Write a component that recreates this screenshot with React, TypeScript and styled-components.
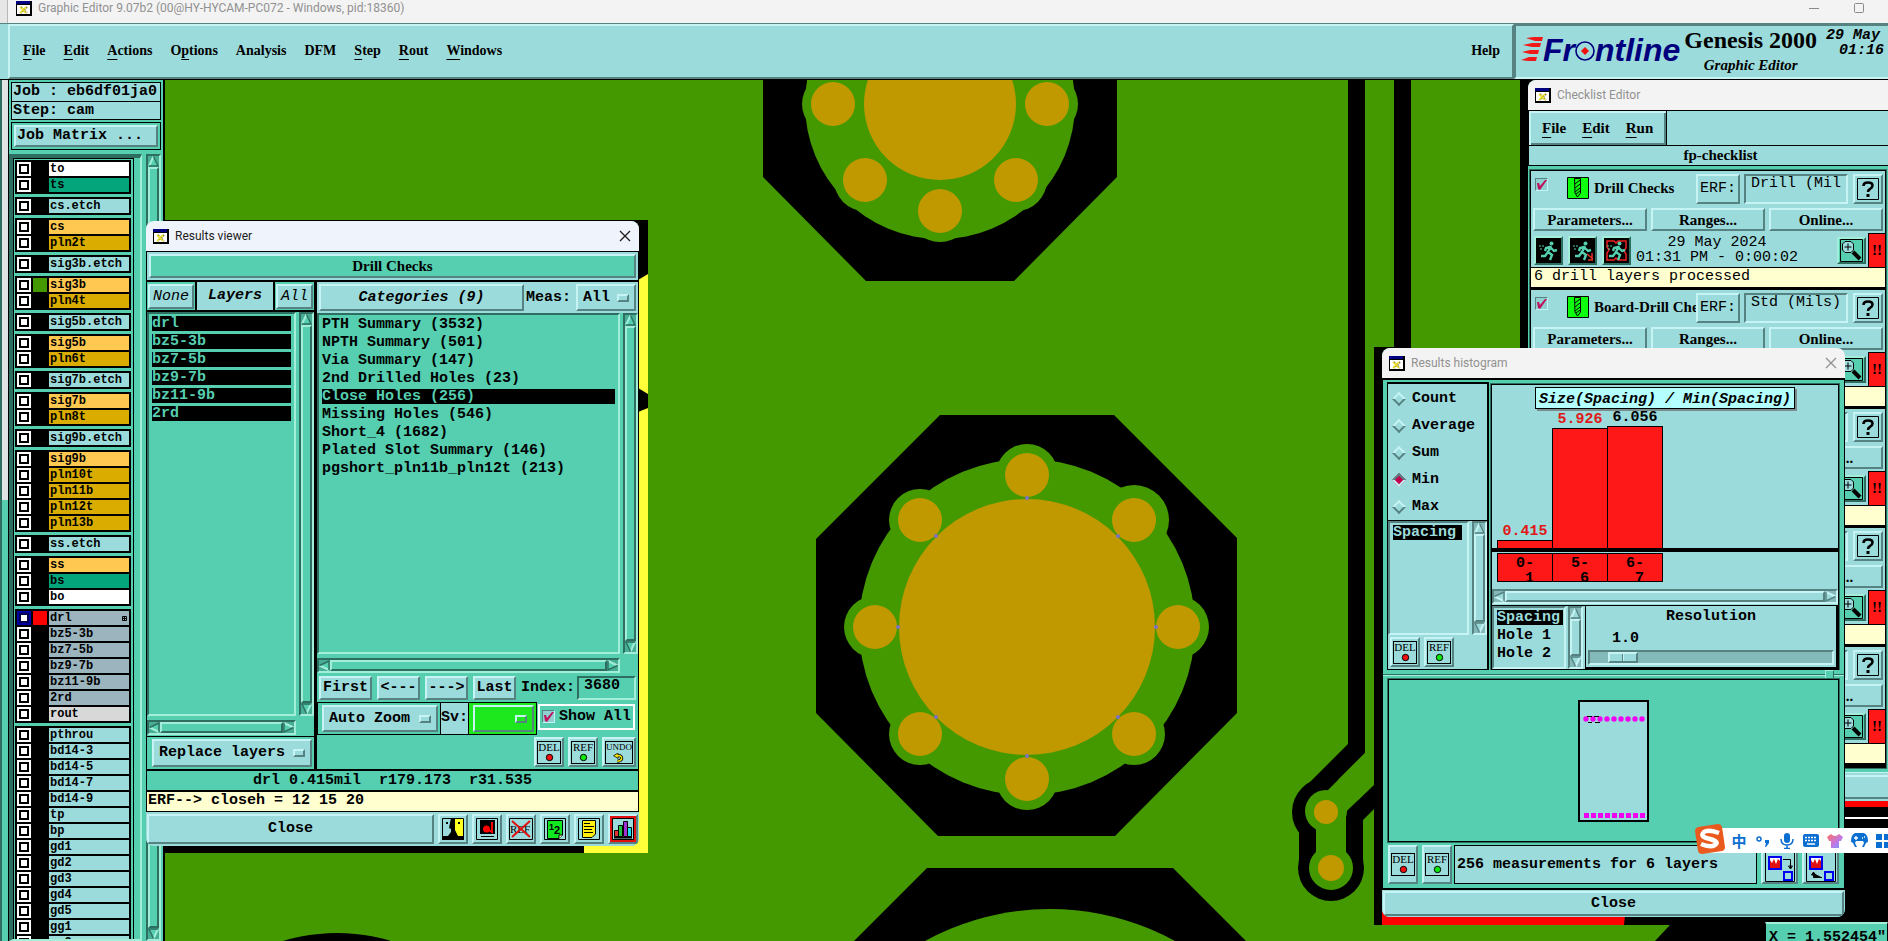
import React from "react";
import styled, { createGlobalStyle, css } from "styled-components";

const cyan = "#9cdbdb";
const cyanLight = "#c6f3f3";
const cyanDark = "#568282";
const teal = "#55cfb0";
const tealLight = "#a2eed8";
const tealDark = "#2d6e60";
const cream = "#ffffcf";
const board = "#449900";
const gold = "#c09800";
const mono = `"Liberation Mono", "Courier New", monospace`;
const serif = `"Liberation Serif", "Times New Roman", serif`;
const ui = `Roboto, "Segoe UI", sans-serif`;

type Tone = { $teal?: boolean };

const raised = css<Tone>`
  border: 2px solid;
  border-color: ${(p) =>
    p.$teal
      ? `${tealLight} ${tealDark} ${tealDark} ${tealLight}`
      : `${cyanLight} ${cyanDark} ${cyanDark} ${cyanLight}`};
`;

const sunken = css<Tone>`
  border: 2px solid;
  border-color: ${(p) =>
    p.$teal
      ? `${tealDark} ${tealLight} ${tealLight} ${tealDark}`
      : `${cyanDark} ${cyanLight} ${cyanLight} ${cyanDark}`};
`;

const Global = createGlobalStyle`
  *, *::after { box-sizing: border-box; }
  body { margin: 0; background: #000; }
  button, input, select { font: inherit; color: inherit; margin: 0; padding: 0; border-radius: 0; }
  ul { list-style: none; margin: 0; padding: 0; }
  svg { display: block; flex: none; }
`;

const Page = styled.div`
  position: relative;
  display: flex;
  flex-direction: column;
  height: 100vh;
  overflow: hidden;
  font: bold 15px/18px ${mono};
  color: #000;
  white-space: pre;
`;

/* ---------- main window chrome ---------- */

const MainTitle = styled.header`
  display: flex;
  align-items: center;
  gap: 6px;
  height: 23px;
  flex: none;
  margin-left: 7px;
  padding: 0 24px 7px 8px;
  border-left: 1px solid #b8b8b8;
  background: #f3f3f3;
  color: #919191;
  font: 12px/16px ${ui};
`;
const TitleBack = styled.div`
  background: #e6e6e6;
  flex: none;
`;
const MainTitleText = styled.span`
  flex: 1;
`;
const WindowGlyphs = styled.div`
  display: flex;
  gap: 35px;
`;

const TopBar = styled.div`
  display: flex;
  flex: none;
  height: 57px;
  padding-left: 8px;
  border-top: 1px solid ${cyanDark};
  border-bottom: 1px solid #000;
  background: ${cyan};
`;
const MenuBar = styled.nav`
  display: flex;
  align-items: center;
  flex: 1;
  gap: 18px;
  padding: 0 12px 2px 13px;
  background: ${cyan};
  ${raised}
`;
const MenuItem = styled.button<{ $push?: boolean }>`
  border: 0;
  background: none;
  font: bold 14px/20px ${serif};
  text-underline-offset: 4px;
  ${(p) => p.$push && "margin-left: auto;"}
`;
const Brand = styled.div`
  display: flex;
  flex: none;
  width: 374px;
  padding: 2px 4px 0 5px;
  background: ${cyan};
  ${sunken}
  border-right: 0;
`;
const Logo = styled.div`
  display: flex;
  align-items: center;
  height: 40px;
  margin-top: 2px;
  color: #00007e;
  font: italic bold 32px/40px "Liberation Sans", Arial, sans-serif;
`;
const Product = styled.div`
  display: flex;
  flex-direction: column;
  align-items: center;
  margin-left: 4px;
`;
const ProductName = styled.span`
  font: bold 24px/24px ${serif};
`;
const ProductSub = styled.span`
  font: italic bold 15px/26px ${serif};
`;
const Clock = styled.time`
  display: flex;
  flex-direction: column;
  align-items: flex-end;
  margin-left: auto;
  font: italic bold 15px/15px ${mono};
`;
const ClockDate = styled.span`
  margin-right: 4px;
`;

const Body = styled.div`
  display: flex;
  flex: 1;
  min-height: 0;
`;
const Edge = styled.div`
  width: 8px;
  flex: none;
  border-left: 2px solid ${tealDark};
  background: linear-gradient(#dfe3e3 420px, ${teal} 420px);
`;
const Sidebar = styled.aside`
  display: flex;
  flex-direction: column;
  width: 157px;
  flex: none;
  border-left: 1px solid #000;
  border-right: 2px solid #000;
  background: ${teal};
`;
const JobLine = styled.div`
  height: 20px;
  margin: 0 2px;
  padding-left: 1px;
  border: 1px solid #000;
  background: ${cyan};
  & + & {
    height: 19px;
    margin-top: -1px;
  }
  &:first-child {
    margin-top: 2px;
  }
`;
const MatrixFrame = styled.div`
  display: flex;
  height: 28px;
  margin: 2px 2px 4px;
  padding: 2px;
  border: 1px solid #000;
`;
const MatrixButton = styled.button`
  flex: 1;
  padding-left: 1px;
  text-align: left;
  background: ${cyan};
  ${raised}
`;
const LayerArea = styled.div`
  display: flex;
  flex: 1;
  min-height: 0;
  justify-content: space-between;
  padding-right: 2px;
`;
const LayerWell = styled.div`
  width: 133px;
  padding-right: 6px;
  border: solid;
  border-width: 4px 2px 2px 4px;
  border-color: ${tealDark} ${tealLight} ${tealLight} ${tealDark};
  overflow: hidden;
`;
const LayerList = styled.div`
  display: flex;
  flex-direction: column;
  gap: 3px;
  padding: 1px 2px 1px 1px;
  border: 1px solid #000;
`;
const LayerGroup = styled.div`
  padding: 1px;
  background: #000;
`;
const LayerRow = styled.label`
  display: flex;
  align-items: center;
  gap: 2px;
  height: 16px;
  padding: 1px;
`;
const LayerCheck = styled.input<{ $active?: boolean }>`
  appearance: none;
  width: 14px;
  height: 14px;
  border: 2px solid ${(p) => (p.$active ? "#0000a8" : "#fff")};
  background: #fff;
  outline: 2px solid ${(p) => (p.$active ? "#00004a" : "#000")};
  outline-offset: -4px;
`;
const Swatch = styled.span`
  width: 14px;
  height: 14px;
`;
const LayerName = styled.span`
  display: flex;
  align-items: center;
  justify-content: space-between;
  flex: 1;
  height: 14px;
  padding: 0 2px 0 1px;
  font: bold 12px/14px ${mono};
`;

const Canvas = styled.main`
  flex: 1;
  min-width: 0;
  background: ${board};
`;

/* ---------- floating windows ---------- */

const Window = styled.section`
  position: absolute;
  display: flex;
  flex-direction: column;
  border-radius: 8px;
  overflow: hidden;
`;
const ResultsWindow = styled(Window)`
  left: 146px;
  top: 221px;
  width: 493px;
  height: 625px;
  background: ${teal};
`;
const HistogramWindow = styled(Window)`
  left: 1382px;
  top: 348px;
  width: 463px;
  height: 569px;
  background: ${teal};
`;
const ChecklistWindow = styled(Window)`
  left: 1528px;
  top: 80px;
  width: 384px;
  background: ${teal};
`;
const TitleBar = styled.header<{ $active?: boolean }>`
  display: flex;
  align-items: center;
  gap: 6px;
  height: 30px;
  flex: none;
  padding: 0 8px 0 7px;
  background: ${(p) => (p.$active ? "#eff3fb" : "#f3f3f3")};
  color: ${(p) => (p.$active ? "#1c1c1c" : "#919191")};
  font: 12px/16px ${ui};
`;
const CloseX = styled.button`
  display: grid;
  place-items: center;
  margin-left: auto;
  border: 0;
  background: none;
`;

const Button = styled.button<Tone & { $w?: number }>`
  display: flex;
  align-items: center;
  justify-content: center;
  flex: none;
  ${(p) => p.$w && `width: ${p.$w}px;`}
  background: ${(p) => (p.$teal ? teal : cyan)};
  ${raised}
`;

/* ---------- scrollbars ---------- */

const Bar = styled.div<Tone & { $across?: boolean }>`
  display: flex;
  flex: none;
  flex-direction: ${(p) => (p.$across ? "row" : "column")};
  ${(p) => (p.$across ? "height: 15px;" : "width: 15px;")}
  background: ${(p) => (p.$teal ? "#47ae95" : "#83b9b9")};
  ${sunken}
`;
const Thumb = styled.div<Tone>`
  flex: 1;
  background: ${(p) => (p.$teal ? teal : cyan)};
  ${raised}
`;
const Arrow = ({ dir, teal: t }: { dir: number; teal?: boolean }) => (
  <svg width="11" height="11" viewBox="0 0 11 11">
    <g transform={`rotate(${dir} 5.5 5.5)`}>
      <path d="M5.500 0.500 L10.500 10.500 H.5 Z" fill={t ? teal : cyan} />
      <path d="M5.500 0.500 L1 10" stroke={t ? tealLight : cyanLight} strokeWidth="2" />
      <path d="M5.500 0.500 L10 10 H1" fill="none" stroke={t ? tealDark : cyanDark} strokeWidth="1.400" />
    </g>
  </svg>
);
const Scrollbar = ({ across, teal: t }: { across?: boolean; teal?: boolean }) => (
  <Bar $across={across} $teal={t}>
    <Arrow dir={across ? -90 : 0} teal={t} />
    <Thumb $teal={t} />
    <Arrow dir={across ? 90 : 180} teal={t} />
  </Bar>
);

/* ---------- option menus ---------- */

const OptionBox = styled.span<{ $w: number; $color?: string }>`
  display: flex;
  align-items: center;
  flex: none;
  width: ${(p) => p.$w}px;
  padding: 0 5px;
  background: ${(p) => p.$color ?? cyan};
  ${raised}
  &::after {
    content: "";
    width: 12px;
    height: 8px;
    border: 2px solid;
    border-color: #c6f3f3 #568282 #568282 #c6f3f3;
  }
  select {
    appearance: none;
    flex: 1;
    min-width: 0;
    border: 0;
    background: none;
  }
`;
const OptionMenu = ({ label, value, w, color }: { label: string; value: string; w: number; color?: string }) => (
  <OptionBox $w={w} $color={color}>
    <select aria-label={label}>
      <option>{value}</option>
    </select>
  </OptionBox>
);

/* ---------- results viewer ---------- */

const ViewerBody = styled.div`
  display: flex;
  flex-direction: column;
  flex: 1;
  min-height: 0;
  border: solid #000;
  border-width: 1px 1px 0;
`;
const Banner = styled.div`
  display: flex;
  flex: none;
  height: 30px;
  padding: 2px;
  border-bottom: 2px solid #000;
  background: ${cyan};
`;
const BannerText = styled.h2`
  flex: 1;
  margin: 0;
  background: ${teal};
  text-align: center;
  font: bold 15px/20px ${serif};
  ${raised}
`;
const Panes = styled.div`
  display: flex;
  flex: 1;
  min-height: 0;
`;
const LeftPane = styled.div`
  display: flex;
  flex-direction: column;
  width: 170px;
  flex: none;
  border-right: 3px solid #000;
`;
const RightPane = styled.div`
  display: flex;
  flex-direction: column;
  flex: 1;
  min-width: 0;
`;
const LayerHead = styled.div`
  display: flex;
  height: 30px;
  flex: none;
  border-bottom: 2px solid #000;
  font-style: italic;
  ${Button} {
    margin: 2px 1px 1px;
    font-style: italic;
    font-weight: normal;
  }
`;
const LayerHeadTitle = styled.div`
  flex: 1;
  border: solid #000;
  border-width: 0 2px;
  background: ${cyan};
  text-align: center;
  line-height: 28px;
`;
const ListArea = styled.div`
  display: flex;
  flex: 1;
  min-height: 0;
  gap: 3px;
`;
const ListBox = styled.ul<Tone>`
  flex: 1;
  min-width: 0;
  padding: 2px 3px 0 3px;
  overflow: hidden;
  ${sunken}
`;
const ListRow = styled.li<Tone & { $on?: boolean }>`
  height: 15px;
  margin-bottom: 3px;
  line-height: 16px;
  ${(p) => p.$on && `background: #000; color: ${p.$teal ? teal : cyan};`}
`;
const ScrollFoot = styled.div`
  margin: 4px 18px 1px 0;
`;
const PaneFoot = styled.div`
  display: flex;
  height: 33px;
  flex: none;
  padding: 2px 1px 2px 5px;
  border-top: 1px solid #000;
`;
const CategoryHead = styled.div`
  display: flex;
  height: 31px;
  flex: none;
  padding: 2px;
  background: ${cyan};
  ${Button} {
    font-style: italic;
    margin-right: 2px;
  }
`;
const MeasLabel = styled.span`
  flex: 1;
  line-height: 28px;
`;
const NavRow = styled.div`
  display: flex;
  height: 24px;
  flex: none;
  gap: 5px;
  margin: 2px;
`;
const IndexField = styled.label`
  display: flex;
  flex: 1;
  justify-content: space-between;
  line-height: 24px;
  input {
    width: 59px;
    padding: 0 0 4px 5px;
    background: ${teal};
    border: 2px solid;
    border-color: ${tealDark} ${tealLight} ${tealLight} ${tealDark};
  }
`;
const ZoomRow = styled.div`
  display: flex;
  align-items: flex-start;
  height: 33px;
  flex: none;
`;
const Framed = styled.div<{ $color?: string; $w: number }>`
  display: flex;
  flex: none;
  justify-content: flex-end;
  width: ${(p) => p.$w}px;
  height: 33px;
  padding: 2px;
  border: 1px solid #000;
  background: ${(p) => p.$color ?? teal};
`;
const SvLabel = styled.span`
  width: 27px;
  height: 33px;
  border: solid #000;
  border-width: 1px 0;
  background: ${cyan};
  line-height: 30px;
`;
const ShowAll = styled.label`
  display: flex;
  align-items: center;
  gap: 4px;
  width: 97px;
  height: 26px;
  margin: 2px 0 0 1px;
  padding: 0 0 1px 2px;
  border: 2px solid #fff;
`;
const TickBox = styled.span<Tone>`
  position: relative;
  display: block;
  width: 13px;
  height: 13px;
  flex: none;
  input {
    appearance: none;
    display: block;
    width: 13px;
    height: 13px;
    border: 1px solid;
    border-color: ${cyanDark} ${cyanLight} ${cyanLight} ${cyanDark};
    background: #8fd0d0;
  }
  svg {
    position: absolute;
    inset: 1px;
    pointer-events: none;
  }
`;
const Tick = ({ label }: { label?: string }) => (
  <TickBox>
    <input type="checkbox" defaultChecked aria-label={label} />
    <svg width="11" height="11" viewBox="0 0 11 11">
      <path d="M1 4 L3 4 L4 7 L9 1 L11 1 L4 11 L2 10 Z" fill="#c0105c" />
    </svg>
  </TickBox>
);
const IconRow = styled.div`
  display: flex;
  justify-content: flex-end;
  height: 34px;
  flex: none;
  gap: 4px;
  padding: 2px;
`;
const StatusLine = styled.div`
  flex: none;
  height: 21px;
  padding-top: 1px;
  border-top: 2px solid #000;
  text-align: center;
`;
const ErfLine = styled.div`
  flex: none;
  height: 22px;
  border: solid #000;
  border-width: 2px 0 1px;
  background: ${cream};
  padding-left: 1px;
`;
const CloseRow = styled.div`
  display: flex;
  flex: none;
  gap: 4px;
  height: 34px;
  padding: 2px 1px;
  background: ${cyan};
`;
const WideButton = styled.button`
  flex: 1;
  background: ${cyan};
  ${raised}
`;

/* ---------- icons ---------- */

const XIcon = () => (
  <svg width="16" height="15" viewBox="0 0 16 15">
    <path d="M0 0 H16 V15 H0 Z" fill="#000" />
    <path d="M1 4 H14 V13 H1 Z" fill="#fff" />
    <path d="M0 0 H14 V3 H0 Z" fill="#000080" />
    <path d="M5 6 L11 12 M11 6 L5 12" stroke="#77702a" strokeWidth="1.800" strokeDasharray="1.500 1.200" />
    <path d="M4 6 L10 12 M10 6 L4 12" stroke="#e8dc20" strokeWidth="1.600" />
  </svg>
);
const Cross = ({ color }: { color: string }) => (
  <svg width="12" height="12" viewBox="0 0 12 12">
    <path d="M1 1 L11 11 M11 1 L1 11" stroke={color} strokeWidth="1.300" />
  </svg>
);
const Tag = styled.span<{ $wide?: boolean }>`
  display: flex;
  flex-direction: column;
  align-items: center;
  width: ${(p) => (p.$wide ? 28 : 24)}px;
  height: 23px;
  border: 1px solid #000;
  font: ${(p) => (p.$wide ? 9 : 11)}px/11px ${serif};
`;
const DotTag = ({ text, color }: { text: string; color: string }) => (
  <Tag>
    {text}
    <svg width="9" height="9" viewBox="0 0 9 9">
      <circle cx="4.500" cy="4.500" r="3.200" fill={color} stroke="#000" />
    </svg>
  </Tag>
);
const UndoTag = () => (
  <Tag $wide>
    UNDO
    <svg width="12" height="10" viewBox="0 0 12 11">
      <path d="M3 3 H7 Q9 4 9 6 Q8 9 4 9" fill="none" stroke="#000" strokeWidth="3.400" />
      <path d="M5 0 L0 3 L5 6 Z" fill="#f4e600" stroke="#000" strokeWidth=".8" />
      <path d="M3 3 H7 Q9 4 9 6 Q8 9 4 9" fill="none" stroke="#f4e600" strokeWidth="1.600" />
    </svg>
  </Tag>
);
const FaceIcon = () => (
  <svg width="22" height="22" viewBox="0 0 22 22">
    <path d="M0 0H22V22H0Z" fill={cyan} />
    <path d="M12 0H22V22H12Z" fill="#ffff20" />
    <path d="M9 0H13V12L16 18H22V22H0V18H6L9 14V11L7 10Z" fill="#000" />
    <path d="M4 5h2M16 5h2" stroke="#000" strokeWidth="2" />
    <path d="M.5 .5H21.500V21.500H.5Z" fill="none" stroke="#000" />
  </svg>
);
const BookIcon = () => (
  <svg width="22" height="22" viewBox="0 0 22 22">
    <path d="M.5 .5H21.500V21.500H.5Z" fill={cyan} stroke="#000" />
    <path d="M4 2H19V16H4Z" fill="#000" />
    <circle cx="10.500" cy="11" r="3.500" fill="#f00" />
    <path d="M11 11L16 14V4" fill="none" stroke="#f00" strokeWidth="2" />
    <path d="M5 18.500H18" stroke="#000" />
  </svg>
);
const NoRefIcon = () => (
  <svg width="24" height="22" viewBox="0 0 24 22">
    <path d="M.5 .5H23.500V21.500H.5Z" fill={cyan} stroke="#000" />
    <text x="1" y="15" fontSize="11" fontFamily="Liberation Serif" fontWeight="normal">REF</text>
    <path d="M3 3L21 19M21 3L3 19" stroke="#e01010" strokeWidth="2" />
  </svg>
);
const HalfIcon = () => (
  <svg width="22" height="22" viewBox="0 0 22 22">
    <path d="M.5 .5H21.500V21.500H.5Z" fill={cyan} stroke="#000" />
    <path d="M3.500 2.500H18.500V17L15 20.500H3.500Z" fill="#10e820" stroke="#000" />
    <path d="M18.500 17H15V20.500" fill={cream} stroke="#000" />
    <text x="5" y="12" fontSize="9" fontFamily="Liberation Sans" fontWeight="bold">1</text>
    <text x="10" y="16" fontSize="11" fontFamily="Liberation Sans" fontWeight="bold">2</text>
  </svg>
);
const NoteIcon = () => (
  <svg width="22" height="22" viewBox="0 0 22 22">
    <path d="M.5 .5H21.500V21.500H.5Z" fill={cyan} stroke="#000" />
    <path d="M4.500 2.500H17.500V16L14 19.500H4.500Z" fill="#ffee10" stroke="#000" />
    <path d="M6 5.500H12M6 8.500H16M6 11.500H14M6 14.500H15" stroke="#000" />
  </svg>
);
const ChartIcon = () => (
  <svg width="22" height="22" viewBox="0 0 22 22">
    <path d="M.5 .5H21.500V21.500H.5Z" fill={cyan} stroke="#000" />
    <path d="M2 19.500H20" stroke="#000" strokeWidth="2" />
    <path d="M2.500 12.500h4v6h-4z" fill="#e03030" stroke="#000" />
    <path d="M6.500 7.500h4v11h-4z" fill="#20c040" stroke="#000" />
    <path d="M11.500 3.500h4v15h-4z" fill="#a030d0" stroke="#000" />
    <path d="M15.500 9.500h4v9h-4z" fill="#20d8f0" stroke="#000" />
  </svg>
);
const ChartButton = styled(Button)`
  background: #e01010;
`;
const DrillIcon = () => (
  <svg width="22" height="22" viewBox="0 0 22 22">
    <path d="M.5 .5H21.500V21.500H.5Z" fill="#0dff0d" stroke="#000" />
    <path d="M7.500 1.500H13.500V16L10.500 20L8 16Z" fill="none" stroke="#000" />
    <path d="M8 7L13 3M8 11L13 7M8 15L13 11M9 17L13 14" stroke="#000" />
  </svg>
);
const QuestionIcon = () => (
  <svg width="22" height="22" viewBox="0 0 22 22">
    <path d="M.5 .5H21.500V21.500H.5Z" fill="none" stroke="#000" />
    <path d="M6.500 8Q6.500 4.500 11 4.500Q15.500 4.500 15.500 7.500Q15.500 9.500 13 11Q11 12 11 14" fill="none" stroke="#000" strokeWidth="2.600" />
    <path d="M9.500 16H12.500V19H9.500Z" />
  </svg>
);
const RunnerIcon = ({ kind }: { kind: number }) => (
  <svg width="25" height="25" viewBox="0 0 25 25">
    <path d="M0 0H25V25H0Z" fill="#000" />
    {kind === 2 && <path d="M3 3H10L12 5L14 3H22V10L20 13L22 16V22H14L12 20L10 22H3V15L5 12L3 9Z" fill="none" stroke="#f02020" strokeWidth="1.500" />}
    <circle cx="15.500" cy="5.500" r="2" fill={teal} />
    <path d="M15 8L12 14L16 17L14 22M12 14L9 18L5 18M14 9L10 10L9 13M15 10L18 13L21 12" fill="none" stroke={teal} strokeWidth="2.400" />
    <path d="M3 8H5M6 8H8M4 11H6" stroke={teal} />
    {kind === 1 && <path d="M17 16L23 21M18 22H23M22 15V22" stroke="#e03020" strokeWidth="1.500" />}
  </svg>
);
const MagnifierIcon = () => (
  <svg width="23" height="23" viewBox="0 0 23 23">
    <path d="M.5 .5H22.500V22.500H.5Z" fill={teal} stroke="#000" />
    <path d="M5 2.500H11L13.500 5V11L11 13.500H5L2.500 11V5Z" fill={cyan} stroke="#000" />
    <path d="M8 4.500V11.500M4.500 8H11.500" stroke="#000" />
    <path d="M13 13L20 20" stroke="#000" strokeWidth="4" />
  </svg>
);
const TransferIcon = ({ back }: { back?: boolean }) => (
  <svg width="30" height="34" viewBox="0 0 30 34">
    <path d="M.5 .5H29.500V33.500H.5Z" fill="none" stroke="#000" />
    <path d="M4 9H16V21H4Z" fill="#fff" stroke="#0000f0" strokeWidth="2" />
    <path d="M5 20V12L7 15L9 11L11 16L13 11L15 13V20Z" fill="#e01010" />
    <path d="M19 24H27V32H19Z" fill={cyan} stroke="#0000f0" strokeWidth="2" />
    {back ? (
      <path d="M16 29.500H7.500V25M5.500 27L7.500 24L9.500 27Z" fill="#000" stroke="#000" />
    ) : (
      <path d="M18 11.500H25.500V20M23.500 18L25.500 21L27.500 18Z" fill="none" stroke="#000" />
    )}
  </svg>
);

/* ---------- checklist ---------- */

const CheckMenu = styled.nav`
  display: flex;
  align-items: center;
  gap: 16px;
  width: 138px;
  height: 34px;
  padding: 0 13px;
  border-right: 1px solid #000;
  background: ${cyan};
  box-shadow: inset 2px 2px ${cyanLight}, inset -2px -2px ${cyanDark};
  ${MenuItem} {
    font-size: 15px;
  }
`;
const CheckTop = styled.div`
  border: 1px solid #000;
  border-width: 1px 0 1px 1px;
  background: ${cyan};
`;
const CheckName = styled.div`
  height: 20px;
  border: solid #000;
  border-width: 0 0 1px 1px;
  background: ${cyan};
  text-align: center;
  font: bold 15px/19px ${serif};
`;
const CheckList = styled.div`
  padding: 4px 0 0 2px;
`;
const CheckItems = styled.div`
  width: 356px;
  border: 1px solid #000;
  border-bottom-width: 2px;
  outline: 1px solid ${tealDark};
`;
const Item = styled.article`
  height: 119px;
  padding-top: 3px;
  background: ${cyan};
`;
const ItemHead = styled.div`
  display: flex;
  height: 30px;
  padding: 0 2px 0 4px;
  ${Button} {
    font-weight: normal;
  }
`;
const ItemTick = styled.div`
  width: 32px;
  padding-top: 4px;
  flex: none;
`;
const ItemIcon = styled.div`
  width: 27px;
  padding-top: 3px;
  flex: none;
`;
const ItemName = styled.h3`
  flex: 1;
  min-width: 0;
  margin: 0;
  overflow: hidden;
  font: bold 15px/28px ${serif};
`;
const ErfInput = styled.input`
  width: 104px;
  margin: 0 5px 0 4px;
  padding: 0 0 10px 5px;
  background: ${cyan};
  font-weight: normal;
  ${sunken}
`;
const ItemLinks = styled.div`
  display: grid;
  grid-template-columns: 1fr 1fr 1fr;
  gap: 4px;
  height: 23px;
  margin: 4px 2px 2px;
  ${Button} {
    font: bold 15px/18px ${serif};
  }
`;
const ItemRun = styled.div`
  display: flex;
  align-items: center;
  gap: 5px;
  height: 34px;
  padding-left: 3px;
  font-weight: normal;
`;
const ItemTime = styled.div`
  margin: 0 auto 0 0;
  text-align: center;
  line-height: 15px;
`;
const Alert = styled.div`
  align-self: stretch;
  width: 17px;
  margin-left: -3px;
  border: solid #000;
  border-width: 1px 0 0 1px;
  background: #ff1818;
  text-align: center;
  font: bold 15px/33px ${serif};
`;
const ItemMessage = styled.div`
  height: 23px;
  padding-left: 3px;
  border: solid #000;
  border-width: 1px 0 3px;
  background: ${cream};
  font-weight: normal;
`;
const CheckFoot = styled.div`
  display: flex;
  height: 29px;
  margin-top: 4px;
  padding: 2px;
  border-top: 1px solid ${cyanLight};
  background: ${cyan};
`;

/* ---------- histogram ---------- */

const HistBody = styled.div`
  display: flex;
  flex-direction: column;
  flex: 1;
  min-height: 0;
  border: solid #000;
  border-width: 2px 1px 1px;
`;
const HistTop = styled.div`
  display: flex;
  height: 288px;
  flex: none;
  gap: 2px;
  margin: 2px 5px 0 4px;
`;
const StatPane = styled.div`
  display: flex;
  flex-direction: column;
  width: 102px;
  flex: none;
  border: solid #000;
  border-width: 2px 2px 1px 1px;
  background: ${cyan};
`;
const Radios = styled.fieldset`
  height: 137px;
  flex: none;
  margin: 0;
  padding: 1px 0 0 4px;
  border: 0;
  border-bottom: 1px solid #000;
  label {
    display: flex;
    align-items: center;
    gap: 6px;
    height: 27px;
  }
  input {
    appearance: none;
    width: 10px;
    height: 10px;
    margin: 0 2px;
    transform: rotate(45deg);
    background: ${cyan};
    border: 2px solid;
    border-color: ${cyanLight} ${cyanDark} ${cyanDark} ${cyanLight};
  }
  input:checked {
    background: #c0004c;
    border-color: ${cyanDark} ${cyanLight} ${cyanLight} ${cyanDark};
  }
`;
const StatLists = styled.div`
  display: flex;
  flex: 1;
  gap: 3px;
  min-height: 0;
  ${ListRow} {
    margin-right: 2px;
  }
`;
const SmallButtons = styled.div`
  display: flex;
  gap: 4px;
  height: 34px;
  flex: none;
  padding: 2px;
`;
const ChartPane = styled.div`
  display: flex;
  flex-direction: column;
  flex: 1;
  border: 1px solid #000;
  margin-top: 2px;
  background: ${cyan};
  box-shadow: 0 0 0 1px ${tealDark};
`;
const Plot = styled.div`
  display: flex;
  flex-direction: column;
  align-items: center;
  height: 167px;
  flex: none;
  padding-top: 2px;
  border-bottom: 4px solid #000;
`;
const PlotTitle = styled.div`
  height: 22px;
  padding: 0 3px;
  border: 1px solid #000;
  background: #b4ffff;
  box-shadow: 2px 2px #7a8c8c;
  font-style: italic;
  line-height: 24px;
`;
const Bars = styled.div`
  display: flex;
  align-items: flex-end;
  align-self: stretch;
  margin-top: auto;
  padding-left: 5px;
`;
const Column = styled.div<{ $red?: boolean }>`
  width: 56px;
  margin-right: -1px;
  text-align: center;
  line-height: 16px;
  color: ${(p) => (p.$red ? "#e01818" : "#000")};
`;
const Fill = styled.div`
  border: 1px solid #000;
  border-bottom: 0;
  background: #ff1818;
`;
const Ticks = styled.div`
  display: flex;
  flex: 1;
  padding: 1px 0 0 5px;
`;
const TickCell = styled.div`
  width: 56px;
  height: 29px;
  margin-right: -1px;
  padding-top: 2px;
  border: 1px solid #000;
  background: #ff1818;
  text-align: center;
  line-height: 15px;
`;
const FieldRow = styled.div`
  display: flex;
  height: 64px;
  flex: none;
  gap: 2px;
  margin-top: 1px;
  border-top: 1px solid #000;
`;
const FieldList = styled.div`
  display: flex;
  gap: 2px;
  width: 91px;
  flex: none;
  ${ListBox} {
    padding-right: 1px;
  }
`;
const Resolution = styled.label`
  display: flex;
  flex-direction: column;
  flex: 1;
  padding: 2px;
  border: solid #000;
  border-width: 0 2px 2px 1px;
  text-align: center;
`;
const ResolutionValue = styled.output`
  display: block;
  width: 75px;
  margin-top: 4px;
`;
const Slider = styled.input`
  appearance: none;
  display: block;
  width: 100%;
  height: 15px;
  margin-top: auto;
  padding: 0 18px;
  background: #83b9b9;
  ${sunken}
  &::-webkit-slider-thumb {
    appearance: none;
    width: 30px;
    height: 11px;
    border: 2px solid;
    border-color: ${cyanLight} ${cyanDark} ${cyanDark} ${cyanLight};
    background: linear-gradient(90deg, ${cyan} 12px, ${cyanDark} 12px 13px, ${cyanLight} 13px 14px, ${cyan} 14px);
  }
`;
const Sash = styled.div`
  display: flex;
  justify-content: flex-end;
  align-items: center;
  height: 9px;
  flex: none;
  padding-right: 10px;
  background: linear-gradient(${teal} 4px, ${tealDark} 4px 5px, ${tealLight} 5px 6px, ${teal} 6px);
`;
const Grip = styled.span`
  width: 9px;
  height: 9px;
  background: ${teal};
  border: 1px solid;
  border-color: ${tealLight} ${tealDark} ${tealDark} ${tealLight};
`;
const Preview = styled.div`
  display: grid;
  place-items: center;
  height: 163px;
  flex: none;
  margin: 0 5px;
  border: 1px solid #000;
  box-shadow: 0 0 0 1px ${tealDark};
`;
const HistFoot = styled.div`
  display: flex;
  flex: 1;
  gap: 4px;
  padding: 3px 5px 4px;
  border-bottom: 1px solid #000;
`;
const Measure = styled.div`
  display: flex;
  align-items: center;
  flex: 1;
  margin-left: -2px;
  padding-left: 2px;
  border: 1px solid #000;
  background: ${cyan};
`;
const HistClose = styled.div`
  display: flex;
  height: 27px;
  flex: none;
  padding: 1px;
  background: ${cyan};
`;

/* ---------- status and input method bar ---------- */

const Coordinates = styled.div`
  position: absolute;
  left: 1765px;
  right: 0;
  top: 922px;
  height: 26px;
  padding: 5px 0 0 3px;
  border: 1px solid #000;
  border-top: 2px solid ${tealLight};
  background: ${teal};
`;
const ImeBar = styled.div`
  position: absolute;
  left: 1700px;
  top: 828px;
  display: flex;
  align-items: center;
  gap: 6px;
  width: 210px;
  height: 25px;
  padding-left: 30px;
  background: #fff;
  color: #0b6fd2;
  font: bold 15px/24px "Noto Sans CJK SC", sans-serif;
`;
const ImeLogo = styled.svg`
  position: absolute;
  left: -7px;
  top: -5px;
`;
const ImeKey = styled.span`
  display: grid;
  place-items: center;
  width: 18px;
`;

/* ---------- data ---------- */

const etch = cyan;
const light = "#ffc850";
const dark = "#dbac00";
const drillGrey = "#9bb4be";
type Layer = [name: string, color: string, swatch?: string];
const layerGroups: Layer[][] = [
  [["to", "#fff"], ["ts", "#05a57c"]],
  [["cs.etch", etch]],
  [["cs", light], ["pln2t", dark]],
  [["sig3b.etch", etch]],
  [["sig3b", light, board], ["pln4t", dark]],
  [["sig5b.etch", etch]],
  [["sig5b", light], ["pln6t", dark]],
  [["sig7b.etch", etch]],
  [["sig7b", light], ["pln8t", dark]],
  [["sig9b.etch", etch]],
  [["sig9b", light], ["pln10t", dark], ["pln11b", dark], ["pln12t", dark], ["pln13b", dark]],
  [["ss.etch", etch]],
  [["ss", light], ["bs", "#05a57c"], ["bo", "#fff"]],
  [
    ["drl", drillGrey, "#ff0000"],
    ["bz5-3b", drillGrey],
    ["bz7-5b", drillGrey],
    ["bz9-7b", drillGrey],
    ["bz11-9b", drillGrey],
    ["2rd", drillGrey],
    ["rout", "#d8d8d8"],
  ],
  ["pthrou", "bd14-3", "bd14-5", "bd14-7", "bd14-9", "tp", "bp", "gd1", "gd2", "gd3", "gd4", "gd5", "gg1", "gg2"].map(
    (n): Layer => [n, cyan]
  ),
];
const drillLayers = ["drl", "bz5-3b", "bz7-5b", "bz9-7b", "bz11-9b", "2rd"];
const categories = [
  "PTH Summary (3532)",
  "NPTH Summary (501)",
  "Via Summary (147)",
  "2nd Drilled Holes (23)",
  "Close Holes (256)",
  "Missing Holes (546)",
  "Short_4 (1682)",
  "Plated Slot Summary (146)",
  "pgshort_pln11b_pln12t (213)",
];
const histogram = [
  { value: 0.415, label: "0.415", tick: "0-\n 1", red: true },
  { value: 5.926, label: "5.926", tick: "5-\n 6", red: true },
  { value: 6.056, label: "6.056", tick: "6-\n 7", red: false },
];
const checks = [
  { name: "Drill Checks", erf: "Drill (Mil" },
  { name: "Board-Drill Checks", erf: "Std (Mils)" },
  { name: "Signal Checks", erf: "Std (Mils)" },
  { name: "Power Checks", erf: "Std (Mils)" },
  { name: "Mask Checks", erf: "Std (Mils)" },
];
const menus = [
  ["", "F", "ile"],
  ["", "E", "dit"],
  ["", "A", "ctions"],
  ["O", "p", "tions"],
  ["Analysis", "", ""],
  ["DFM", "", ""],
  ["", "S", "tep"],
  ["", "R", "out"],
  ["", "W", "indows"],
];

/* ---------- drawing of the board ---------- */

const ring = (cx: number, cy: number, pts: number[][], r: number, fill: string) =>
  pts.map(([dx, dy]) => <circle key={`${dx},${dy}`} cx={cx + dx} cy={cy + dy} r={r} fill={fill} />);
const upperPads = [[-107, 0], [107, 0], [-75, 76], [76, 76], [0, 107]];
const lowerPads = [[0, -152], [0, 152], [-152, 0], [151, 0], [-107, -107], [107, -107], [-107, 107], [107, 107]];
const marks = [[0, -129], [-91, -91], [91, -91], [-129, 0], [129, 0], [-91, 90], [91, 90], [0, 129]];

const Board = () => (
  <svg width="100%" height="100%" role="img" aria-label="Layer artwork">
    <g transform="translate(-165 -80)">
      <path d="M763 80H1117V177L1014 281H866L763 177Z" />
      <circle cx="940" cy="104" r="135" fill={board} />
      {ring(940, 104, upperPads, 31, board)}
      {ring(940, 104, upperPads, 22, gold)}
      <circle cx="940" cy="104" r="76" fill={gold} />

      <path d="M940 415H1114L1237 538V713L1115 836H938L816 713V539Z" />
      <circle cx="1027" cy="627" r="168" fill={board} />
      {ring(1027, 627, lowerPads, 31, board)}
      <circle cx="1134" cy="520" r="35" fill={board} />
      {ring(1027, 627, lowerPads, 22, gold)}
      <circle cx="1027" cy="627" r="128" fill={gold} />
      {ring(1027, 627, marks, 2, "#7d70c8")}

      <path d="M927 868H1173L1373 1068V1400H727V1068Z" />
      <circle cx="1050" cy="1169" r="260" fill={board} />
      <circle cx="337" cy="1119" r="186" />

      <path d="M1348 80H1365V753L1328 790L1308 784L1348 744Z" />
      <path d="M1394 80H1411V350H1394Z M1520 80H1534V350H1520Z M1374 347H1400V925H1374Z" />
      <circle cx="1326" cy="812" r="34" />
      <circle cx="1331" cy="868" r="33" />
      <path d="M1299 812H1363V868H1299Z" />
      <path d="M1328 790L1365 753H1374V785L1347 811L1326 833Z" fill={board} />
      <path d="M1347 811L1374 785V809L1363 820V868H1346Z" />
      <circle cx="1326" cy="811" r="21" fill={board} />
      <circle cx="1331" cy="868" r="22" fill={board} />
      <path d="M1316 811H1346V868H1316Z" fill={board} />
      <circle cx="1326" cy="812" r="12" fill={gold} />
      <circle cx="1331" cy="868" r="13" fill={gold} />

      <path d="M144 220H648V853H165Z" />
      <path d="M638 280L648 274V394L638 388Z M638 412L648 408V853H584V843H638Z" fill="#ffff3a" />

      <path d="M1830 790H4000V3000H1655V941L1670 925V910H1830Z" />
      <path d="M1600 905H1850V925H1600Z" />
      <path d="M1382 905H1626L1624 925H1382Z" fill="#f00" />
      <path d="M1840 798H4000V807H1840Z" fill="#f00" />
      <path d="M1840 817H4000V819H1840Z" fill="#fff" />
    </g>
  </svg>
);

const BoardThumb = () => (
  <svg width="71" height="122" viewBox="0 0 71 122">
    <path d="M1 1H70V121H1Z" fill={cyan} stroke="#000" strokeWidth="2" />
    {[0, 1, 2, 3, 4, 5, 6, 7, 8].map((i) => (
      <g key={i} fill="#f000f0">
        <circle cx={8 + i * 7} cy="19" r="2.700" />
        <path d={`M${6 + i * 7} 113h5v5h-5z`} />
      </g>
    ))}
    <path d="M9 16.500H14M16 16.500H21M10 22.500H14M17 22.500H22" stroke="#000" />
  </svg>
);

export default function App() {
  return (
    <>
      <Global />
      <Page>
        <TitleBack>
          <MainTitle>
            <XIcon />
            <MainTitleText>Graphic Editor 9.07b2 (00@HY-HYCAM-PC072 - Windows, pid:18360)</MainTitleText>
            <WindowGlyphs>
              <svg width="10" height="10"><path d="M0 5.500H10" stroke="#8a8a8a" /></svg>
              <svg width="10" height="10"><rect x=".5" y=".5" width="9" height="9" rx="1" fill="none" stroke="#8a8a8a" /></svg>
            </WindowGlyphs>
          </MainTitle>
        </TitleBack>
        <TopBar>
          <MenuBar>
            {menus.map(([a, u, b]) => (
              <MenuItem key={a + u + b}>
                {a}
                {u && <u>{u}</u>}
                {b}
              </MenuItem>
            ))}
            <MenuItem $push>Help</MenuItem>
          </MenuBar>
          <Brand>
            <Logo>
              <svg width="22" height="26" viewBox="0 0 22 26">
                <path d="M5 1L13 0H22L21 4H14ZM2 8L11 6H20L19 10H11ZM1 15L9 13H18L17 17H9ZM0 23L8 20H16L15 24H7Z" fill="#f01818" />
              </svg>
              Fr
              <svg width="20" height="24" viewBox="0 0 20 24">
                <circle cx="10" cy="13" r="9" fill={cyan} stroke="#00007e" strokeWidth="1.600" />
                <path d="M10 9L14 13L10 17L6 13Z" fill="#f01010" />
              </svg>
              ntline
            </Logo>
            <Product>
              <ProductName>Genesis 2000</ProductName>
              <ProductSub>Graphic Editor</ProductSub>
            </Product>
            <Clock>
              <ClockDate>29 May</ClockDate>
              <span>01:16</span>
            </Clock>
          </Brand>
        </TopBar>
        <Body>
          <Edge />
          <Sidebar>
            <JobLine>Job : eb6df01ja0</JobLine>
            <JobLine>Step: cam</JobLine>
            <MatrixFrame>
              <MatrixButton>Job Matrix ...</MatrixButton>
            </MatrixFrame>
            <LayerArea>
              <LayerWell>
                <LayerList>
                  {layerGroups.map((group, i) => (
                    <LayerGroup key={i}>
                      {group.map(([name, color, swatch]) => (
                        <LayerRow key={name}>
                          <LayerCheck type="checkbox" $active={name === "drl"} />
                          <Swatch style={{ background: swatch ?? "#000" }} />
                          <LayerName style={{ background: color }}>
                            {name}
                            {name === "drl" && (
                              <svg width="5" height="5"><path d="M.5 .5H4.500V4.500H.5ZM2.500 0V5M0 2.500H5" fill="none" stroke="#000" /></svg>
                            )}
                          </LayerName>
                        </LayerRow>
                      ))}
                    </LayerGroup>
                  ))}
                </LayerList>
              </LayerWell>
              <Scrollbar teal />
            </LayerArea>
          </Sidebar>
          <Canvas>
            <Board />
          </Canvas>
        </Body>

        <ChecklistWindow>
          <TitleBar>
            <XIcon />
            Checklist Editor
          </TitleBar>
          <CheckTop>
            <CheckMenu>
              <MenuItem><u>F</u>ile</MenuItem>
              <MenuItem><u>E</u>dit</MenuItem>
              <MenuItem><u>R</u>un</MenuItem>
            </CheckMenu>
          </CheckTop>
          <CheckName>fp-checklist</CheckName>
          <CheckList>
            <CheckItems>
              {checks.map((c) => (
                <Item key={c.name}>
                  <ItemHead>
                    <ItemTick><Tick label={c.name} /></ItemTick>
                    <ItemIcon><DrillIcon /></ItemIcon>
                    <ItemName>{c.name}</ItemName>
                    <Button $w={44}>ERF:</Button>
                    <ErfInput aria-label="ERF" defaultValue={c.erf} />
                    <Button $w={30} aria-label="Help"><QuestionIcon /></Button>
                  </ItemHead>
                  <ItemLinks>
                    <Button>Parameters...</Button>
                    <Button>Ranges...</Button>
                    <Button>Online...</Button>
                  </ItemLinks>
                  <ItemRun>
                    <Button $teal aria-label="Run"><RunnerIcon kind={0} /></Button>
                    <Button $teal aria-label="Run locally"><RunnerIcon kind={1} /></Button>
                    <Button $teal aria-label="Run on region"><RunnerIcon kind={2} /></Button>
                    <ItemTime>{"29 May 2024\n01:31 PM - 0:00:02"}</ItemTime>
                    <Button $teal $w={29} aria-label="View results"><MagnifierIcon /></Button>
                    <Alert>!!</Alert>
                  </ItemRun>
                  <ItemMessage>6 drill layers processed</ItemMessage>
                </Item>
              ))}
            </CheckItems>
          </CheckList>
          <CheckFoot>
            <WideButton>Close</WideButton>
          </CheckFoot>
        </ChecklistWindow>

        <ResultsWindow>
          <TitleBar $active>
            <XIcon />
            Results viewer
            <CloseX aria-label="Close window"><Cross color="#1c1c1c" /></CloseX>
          </TitleBar>
          <ViewerBody>
            <Banner><BannerText>Drill Checks</BannerText></Banner>
            <Panes>
              <LeftPane>
                <LayerHead>
                  <Button $w={46}>None</Button>
                  <LayerHeadTitle>Layers</LayerHeadTitle>
                  <Button $w={37}>All</Button>
                </LayerHead>
                <ListArea>
                  <ListBox $teal>
                    {drillLayers.map((n) => <ListRow key={n} $teal $on>{n}</ListRow>)}
                  </ListBox>
                  <Scrollbar teal />
                </ListArea>
                <ScrollFoot><Scrollbar teal across /></ScrollFoot>
                <PaneFoot><OptionMenu label="Layer mode" value="Replace layers" w={160} /></PaneFoot>
              </LeftPane>
              <RightPane>
                <CategoryHead>
                  <Button $w={205}>Categories (9)</Button>
                  <MeasLabel>Meas:</MeasLabel>
                  <OptionMenu label="Measurements" value="All" w={60} />
                </CategoryHead>
                <ListArea>
                  <ListBox $teal>
                    {categories.map((n, i) => <ListRow key={n} $teal $on={i === 4}>{n}</ListRow>)}
                  </ListBox>
                  <Scrollbar teal />
                </ListArea>
                <ScrollFoot><Scrollbar teal across /></ScrollFoot>
                <NavRow>
                  <Button $w={53}>First</Button>
                  <Button $w={43}>&lt;---</Button>
                  <Button $w={43}>---&gt;</Button>
                  <Button $w={43}>Last</Button>
                  <IndexField>Index:<input defaultValue="3680" /></IndexField>
                </NavRow>
                <ZoomRow>
                  <Framed $w={124}><OptionMenu label="Zoom mode" value="Auto Zoom" w={116} /></Framed>
                  <SvLabel>Sv:</SvLabel>
                  <Framed $w={69} $color="#1de81d"><OptionMenu label="Severity" value="" w={61} color="#1de81d" /></Framed>
                  <ShowAll><Tick label="Show All" />Show All</ShowAll>
                </ZoomRow>
                <IconRow>
                  <Button $w={30}><DotTag text="DEL" color="#f01010" /></Button>
                  <Button $w={30}><DotTag text="REF" color="#10e810" /></Button>
                  <Button $w={34}><UndoTag /></Button>
                </IconRow>
              </RightPane>
            </Panes>
            <StatusLine>drl 0.415mil  r179.173  r31.535</StatusLine>
            <ErfLine>ERF--&gt; closeh = 12 15 20</ErfLine>
          </ViewerBody>
          <CloseRow>
            <WideButton>Close</WideButton>
            <Button $w={30} aria-label="Compare"><FaceIcon /></Button>
            <Button $w={30} aria-label="Reference"><BookIcon /></Button>
            <Button $w={30} aria-label="No reference"><NoRefIcon /></Button>
            <Button $w={30} aria-label="Pages"><HalfIcon /></Button>
            <Button $w={30} aria-label="Notes"><NoteIcon /></Button>
            <ChartButton $w={30} aria-label="Histogram"><ChartIcon /></ChartButton>
          </CloseRow>
        </ResultsWindow>

        <HistogramWindow>
          <TitleBar>
            <XIcon />
            Results histogram
            <CloseX aria-label="Close window"><Cross color="#919191" /></CloseX>
          </TitleBar>
          <HistBody>
            <HistTop>
              <StatPane>
                <Radios>
                  {["Count", "Average", "Sum", "Min", "Max"].map((n) => (
                    <label key={n}>
                      <input type="radio" name="stat" defaultChecked={n === "Min"} />
                      {n}
                    </label>
                  ))}
                </Radios>
                <StatLists>
                  <ListBox><ListRow $on>Spacing</ListRow></ListBox>
                  <Scrollbar />
                </StatLists>
                <SmallButtons>
                  <Button $w={30}><DotTag text="DEL" color="#f01010" /></Button>
                  <Button $w={30}><DotTag text="REF" color="#10e810" /></Button>
                </SmallButtons>
              </StatPane>
              <ChartPane>
                <Plot>
                  <PlotTitle>Size(Spacing) / Min(Spacing)</PlotTitle>
                  <Bars>
                    {histogram.map((h) => (
                      <Column key={h.label} $red={h.red}>
                        {h.label}
                        <Fill style={{ height: Math.round(h.value * 20.2) }} />
                      </Column>
                    ))}
                  </Bars>
                </Plot>
                <Ticks>
                  {histogram.map((h) => <TickCell key={h.label}>{h.tick}</TickCell>)}
                </Ticks>
                <Scrollbar across />
                <FieldRow>
                  <FieldList>
                    <ListBox>
                      <ListRow $on>Spacing</ListRow>
                      <ListRow>Hole 1</ListRow>
                      <ListRow>Hole 2</ListRow>
                    </ListBox>
                    <Scrollbar />
                  </FieldList>
                  <Resolution>
                    Resolution
                    <ResolutionValue>1.0</ResolutionValue>
                    <Slider type="range" min="0" max="10" defaultValue="0" />
                  </Resolution>
                </FieldRow>
              </ChartPane>
            </HistTop>
            <Sash><Grip /></Sash>
            <Preview><BoardThumb /></Preview>
            <HistFoot>
              <Button $w={30}><DotTag text="DEL" color="#f01010" /></Button>
              <Button $w={30}><DotTag text="REF" color="#10e810" /></Button>
              <Measure>256 measurements for 6 layers</Measure>
              <Button $w={37} aria-label="Send to list"><TransferIcon /></Button>
              <Button $w={37} aria-label="Take from list"><TransferIcon back /></Button>
            </HistFoot>
          </HistBody>
          <HistClose><WideButton>Close</WideButton></HistClose>
        </HistogramWindow>

        <Coordinates>X = 1.552454"</Coordinates>
        <ImeBar>
          <ImeLogo width="34" height="32" viewBox="0 0 34 32">
            <path d="M2 8Q2 5 5 4L25 1Q28 1 29 4L32 24Q32 27 29 28L9 31Q6 31 5 28Z" fill="#ea5a1e" />
            <path d="M26 10Q15 6 11 9Q6 14 17 16Q27 19 22 22Q17 25 8 21" fill="none" stroke="#fff" strokeWidth="4.500" />
          </ImeLogo>
          <ImeKey>中</ImeKey>
          <ImeKey>
            <svg width="14" height="14"><circle cx="3" cy="5" r="2" fill="none" stroke="#0b6fd2" strokeWidth="1.500" /><path d="M9 6h4v3l-3 4h-1l1-4h-1z" fill="#0b6fd2" /></svg>
          </ImeKey>
          <ImeKey>
            <svg width="14" height="16"><rect x="4" y="0" width="6" height="10" rx="3" fill="#0b6fd2" /><path d="M1 6Q1 12 7 12Q13 12 13 6M7 12V16M4 15.500H10" fill="none" stroke="#0b6fd2" strokeWidth="1.500" /></svg>
          </ImeKey>
          <ImeKey>
            <svg width="16" height="13"><rect width="16" height="13" rx="2" fill="#0b6fd2" /><path d="M2 3.500H14M2 6.500H14" stroke="#fff" strokeWidth="1.500" strokeDasharray="2 1" /><path d="M4 10H12" stroke="#fff" strokeWidth="1.500" /></svg>
          </ImeKey>
          <ImeKey>
            <svg width="16" height="14">
              <defs><linearGradient id="shirt" x2="1" y2="1"><stop offset="0" stopColor="#ff7060" /><stop offset=".6" stopColor="#c078e8" /><stop offset="1" stopColor="#60a0ff" /></linearGradient></defs>
              <path d="M4 0Q8 4 12 0L16 3L14 7H12V14H4V7H2L0 3Z" fill="url(#shirt)" />
            </svg>
          </ImeKey>
          <ImeKey>
            <svg width="17" height="15"><path d="M4 0H13Q17 2 17 8Q17 10 13 10L12 8H5L4 10Q0 10 0 8Q0 2 4 0Z" fill="#0b6fd2" /><path d="M2 10L4 14H6L4 10ZM15 10L13 14H11L13 10Z" fill="#0b6fd2" /><path d="M3 5H7M5 3V7M11 5H12M13 4H14" stroke="#fff" strokeWidth="1.300" /></svg>
          </ImeKey>
          <ImeKey>
            <svg width="14" height="14"><path d="M0 0H6V6H0ZM0 8H6V14H0ZM8 8H14V14H8ZM8 0H14V6H8Z" fill="#0b6fd2" /></svg>
          </ImeKey>
        </ImeBar>
      </Page>
    </>
  );
}
